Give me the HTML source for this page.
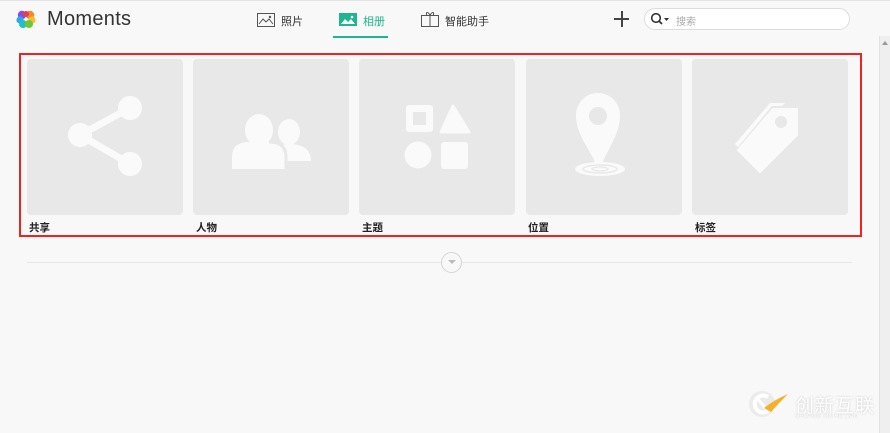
<!DOCTYPE html>
<html><head><meta charset="utf-8"><style>
*{margin:0;padding:0;box-sizing:border-box}
body{width:890px;height:433px;overflow:hidden;background:#f8f8f8;font-family:"Liberation Sans","Noto Sans CJK SC",sans-serif;position:relative}
.top{position:absolute;left:0;top:0;width:890px;height:1px;background:#e4e4e4}
.abs{position:absolute}
.logo{left:47px;top:8px;font-size:20px;color:#333;letter-spacing:0.3px}
.nav{font-size:11px;color:#333}
.card{position:absolute;top:59px;width:156px;height:156px;background:#e8e8e8;border-radius:4px}
.lbl{position:absolute;top:220px;font-size:10.5px;font-weight:bold;color:#222}
.red{left:19px;top:53px;width:843px;height:184px;border:2px solid #ee2222}
.scroll{left:879px;top:36px;width:11px;height:397px;background:#efefef;border-left:1px solid #e2e2e2}
</style></head><body>
<div class="top"></div>
<svg class="abs" style="left:16px;top:10px" width="20" height="19" viewBox="0 0 20 19">
<circle cx="6" cy="5" r="4.2" fill="#8a4fd8"/><circle cx="14" cy="5" r="4.2" fill="#f2892c"/>
<circle cx="4" cy="10" r="3.6" fill="#2fa8e8"/><circle cx="16" cy="10" r="3.6" fill="#f5c02a"/>
<circle cx="7" cy="14" r="4" fill="#21c2c2"/><circle cx="13" cy="14" r="4" fill="#72c43a"/>
<circle cx="10" cy="4" r="3" fill="#e3404f"/>
</svg>
<div class="abs logo">Moments</div>
<svg class="abs" style="left:257px;top:13px" width="18" height="14" viewBox="0 0 18 14"><rect x="0.5" y="0.5" width="17" height="13" fill="none" stroke="#555"/><path d="M2 11 L6 6 L9 9 L12 6 L16 11" fill="none" stroke="#555"/><circle cx="13" cy="4" r="1.2" fill="#555"/></svg>
<div class="abs nav" style="left:281px;top:13px">照片</div>
<svg class="abs" style="left:339px;top:13px" width="18" height="13" viewBox="0 0 18 13"><rect width="18" height="13" fill="#1fb590"/><path d="M2 11 L6 6 L9 9 L12 6 L16 11Z" fill="#fff"/><circle cx="13" cy="4" r="1.3" fill="#fff"/></svg>
<div class="abs nav" style="left:363px;top:13px;color:#1fb590">相册</div>
<div class="abs" style="left:333px;top:36px;width:55px;height:2px;background:#1fb590"></div>
<svg class="abs" style="left:421px;top:11px" width="18" height="16" viewBox="0 0 18 16"><rect x="0.5" y="4.5" width="17" height="11" fill="none" stroke="#555"/><path d="M9 4.5V15.5M6 4.5 C4 1 7 0 9 4.5 C11 0 14 1 12 4.5" fill="none" stroke="#555"/></svg>
<div class="abs nav" style="left:445px;top:13px">智能助手</div>
<div class="abs" style="left:614px;top:18px;width:15px;height:2px;background:#444"></div>
<div class="abs" style="left:621px;top:11px;width:2px;height:16px;background:#444"></div>
<div class="abs" style="left:644px;top:8px;width:206px;height:22px;border:1px solid #ddd;border-radius:11px;background:#fff"></div>
<svg class="abs" style="left:650px;top:12px" width="22" height="14" viewBox="0 0 22 14"><circle cx="6" cy="6" r="4.3" fill="none" stroke="#333" stroke-width="1.6"/><path d="M9 9 L12 12" stroke="#333" stroke-width="1.8"/><path d="M14 6 L19 6 L16.5 9Z" fill="#333"/></svg>
<div class="abs" style="left:676px;top:13px;font-size:10px;color:#aaa">搜索</div>

<div class="card" style="left:27px"></div>
<div class="card" style="left:193px"></div>
<div class="card" style="left:359px"></div>
<div class="card" style="left:526px"></div>
<div class="card" style="left:692px"></div>

<svg class="abs" style="left:27px;top:59px" width="156" height="156"><g fill="#fafafa"><circle cx="103" cy="49" r="12"/><circle cx="53" cy="76" r="12"/><circle cx="103" cy="105" r="12"/></g><path d="M103 49 L53 76 L103 105" stroke="#fafafa" stroke-width="7" fill="none"/></svg>
<svg class="abs" style="left:193px;top:59px" width="156" height="156"><g fill="#fafafa"><ellipse cx="96" cy="73" rx="11" ry="13"/><path d="M80 102 Q80 85 96 85 Q118 85 118 102Z"/><ellipse cx="66" cy="71" rx="14" ry="16"/><path d="M39 110 V98 Q39 83 56 83 H76 Q93 83 93 98 V110Z"/></g><path d="M93 110 V98 Q93 83 76 83" stroke="#e8e8e8" stroke-width="3" fill="none"/></svg>
<svg class="abs" style="left:359px;top:59px" width="156" height="156"><g fill="#fafafa"><rect x="47" y="46" width="27" height="27" rx="3"/><path d="M94 47 L110 73 H82Z" stroke="#fafafa" stroke-width="3" stroke-linejoin="round"/><circle cx="59" cy="96" r="13.5"/><rect x="82" y="83" width="27" height="27" rx="3"/></g><rect x="54" y="53" width="13" height="13" fill="#e8e8e8"/></svg>
<svg class="abs" style="left:526px;top:59px" width="156" height="156"><g fill="#fafafa"><path d="M73 116 C70 95 50 80 50 56 A22 22 0 0 1 94 56 C94 80 76 95 73 116Z"/><ellipse cx="74" cy="110" rx="25" ry="7"/></g><circle cx="72" cy="57" r="9" fill="#e8e8e8"/><ellipse cx="74" cy="110" rx="17" ry="4" fill="none" stroke="#e8e8e8" stroke-width="1.5"/><ellipse cx="74" cy="110" rx="8" ry="2" fill="none" stroke="#e8e8e8" stroke-width="1.3"/></svg>
<svg class="abs" style="left:692px;top:59px" width="156" height="156"><g fill="#fafafa"><path d="M43 85 L78 44 H93 L90 47 H80 L46 88Z"/><path d="M81 50 H105 V76 L68 113 L46 91 Z" stroke="#fafafa" stroke-width="2" stroke-linejoin="round"/></g><circle cx="89" cy="63" r="6" fill="#e8e8e8"/></svg>

<div class="lbl" style="left:29px">共享</div>
<div class="lbl" style="left:196px">人物</div>
<div class="lbl" style="left:362px">主题</div>
<div class="lbl" style="left:528px">位置</div>
<div class="lbl" style="left:695px">标签</div>
<div class="abs red"></div>

<div class="abs" style="left:27px;top:262px;width:825px;height:1px;background:#e6e6e6"></div>
<div class="abs" style="left:441px;top:252px;width:21px;height:21px;border:1px solid #d4d4d4;border-radius:50%;background:#f8f8f8"></div>
<svg class="abs" style="left:447px;top:259px" width="10" height="6"><path d="M1 1 H9 L5 5Z" fill="#bbb"/></svg>

<div class="abs scroll"></div>
<svg class="abs" style="left:881px;top:40px" width="8" height="6"><path d="M1 5 L4 1 L7 5Z" fill="#999"/></svg>

<svg class="abs" style="left:748px;top:386px" width="44" height="38">
<circle cx="14" cy="18" r="13" fill="#e2e2e2" opacity="0.6"/>
<path d="M20 11 A8.5 8.5 0 1 0 20 25" fill="none" stroke="#fff" stroke-width="4"/>
<path d="M9 12 L19 24" stroke="#fff" stroke-width="3"/>
<path d="M16 22 Q26 14 40 8 Q30 18 23 26 Z" fill="#f2b22a"/>
</svg>
<div class="abs" style="left:795px;top:391px;font-size:19px;color:#fff;text-shadow:0 0 2px #c8c8c8;letter-spacing:1px">创新互联</div>
<div class="abs" style="left:795px;top:414px;font-size:6px;color:#fff;text-shadow:0 0 1px #bbb">CHUANG XIN HU LIAN</div>
</body></html>
